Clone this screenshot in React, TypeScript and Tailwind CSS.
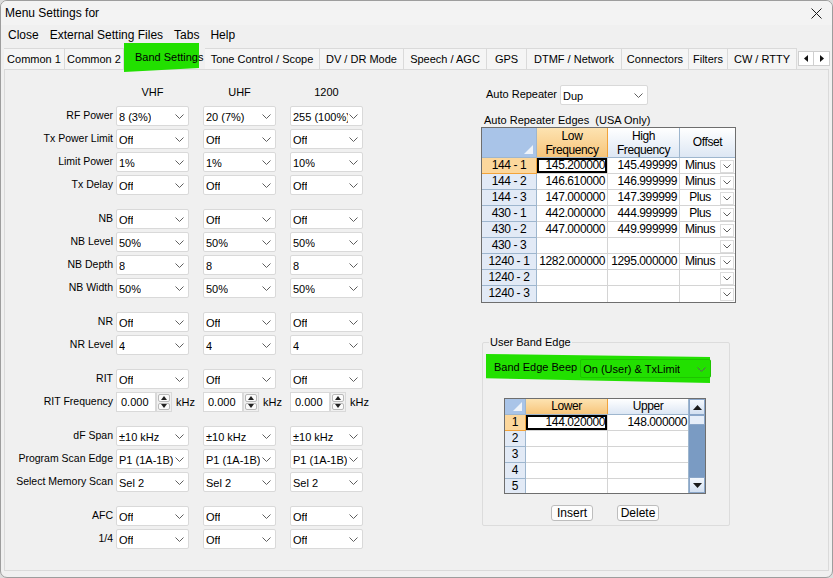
import React from 'react';

type Row = [string, string[] | 'spin'];

const OFF = ['Off', 'Off', 'Off'];

const groups: Row[][] = [
  [
    ['RF Power', ['8 (3%)', '20 (7%)', '255 (100%)']],
    ['Tx Power Limit', OFF],
    ['Limit Power', ['1%', '1%', '10%']],
    ['Tx Delay', OFF],
  ],
  [
    ['NB', OFF],
    ['NB Level', ['50%', '50%', '50%']],
    ['NB Depth', ['8', '8', '8']],
    ['NB Width', ['50%', '50%', '50%']],
  ],
  [
    ['NR', OFF],
    ['NR Level', ['4', '4', '4']],
  ],
  [
    ['RIT', OFF],
    ['RIT Frequency', 'spin'],
  ],
  [
    ['dF Span', ['±10 kHz', '±10 kHz', '±10 kHz']],
    ['Program Scan Edge', ['P1 (1A-1B)', 'P1 (1A-1B)', 'P1 (1A-1B)']],
    ['Select Memory Scan', ['Sel 2', 'Sel 2', 'Sel 2']],
  ],
  [
    ['AFC', OFF],
    ['1/4', OFF],
  ],
];

const tabs = [
  { label: 'Common 1', w: 'w-[61px]' },
  { label: 'Common 2', w: 'w-[59px]' },
  { label: 'Band Settings', w: 'w-[81px]', active: true },
  { label: 'Tone Control / Scope', w: 'w-[115px]' },
  { label: 'DV / DR Mode', w: 'w-[84px]' },
  { label: 'Speech / AGC', w: 'w-[83px]' },
  { label: 'GPS', w: 'w-[40px]' },
  { label: 'DTMF / Network', w: 'w-[95px]' },
  { label: 'Connectors', w: 'w-[67px]' },
  { label: 'Filters', w: 'w-[39px]' },
  { label: 'CW / RTTY', w: 'w-[69px]' },
];

const repeaterRows = [
  ['144 - 1', '145.200000', '145.499999', 'Minus'],
  ['144 - 2', '146.610000', '146.999999', 'Minus'],
  ['144 - 3', '147.000000', '147.399999', 'Plus'],
  ['430 - 1', '442.000000', '444.999999', 'Plus'],
  ['430 - 2', '447.000000', '449.999999', 'Minus'],
  ['430 - 3', '', '', ''],
  ['1240 - 1', '1282.000000', '1295.000000', 'Minus'],
  ['1240 - 2', '', '', ''],
  ['1240 - 3', '', '', ''],
];

function Chevron({ className = '' }: { className?: string }) {
  return (
    <svg width="9" height="5" viewBox="0 0 9 5" className={className}>
      <polyline points="0.5,0.5 4.5,4.5 8.5,0.5" fill="none" stroke="#5f5f5f" strokeWidth="1" />
    </svg>
  );
}

function Combo({
  value,
  width = 'w-[73px]',
  height = 'h-[20px]',
  tone = 'bg-white border-[#d9d9d9]',
}: {
  value: string;
  width?: string;
  height?: string;
  tone?: string;
}) {
  return (
    <div className={`${width} ${height} ${tone} relative flex flex-none items-center border rounded-[2px] pl-[2px] pr-[14px] overflow-hidden`}>
      <span className="text-[11px] leading-[14px] whitespace-nowrap overflow-hidden pt-[1px]">{value}</span>
      <Chevron className="absolute right-[4px] top-[7px]" />
    </div>
  );
}

function Spin() {
  return (
    <div className="w-[73px] flex flex-none items-center">
      <div className="w-[40px] h-[20px] flex-none bg-white border border-[#d9d9d9] flex items-center pl-[4px] text-[11px]">
        0.000
      </div>
      <div className="w-[16px] h-[20px] flex-none flex flex-col gap-[1px] p-[1px] bg-[#f0f0f0] border border-[#d9d9d9]">
        <div className="flex-1 flex items-center justify-center bg-[#fbfbfb] border border-[#b9b9b9] rounded-[2px]">
          <svg width="6" height="4" viewBox="0 0 6 4"><polygon points="0,4 3,0 6,4" fill="#222" /></svg>
        </div>
        <div className="flex-1 flex items-center justify-center bg-[#fbfbfb] border border-[#b9b9b9] rounded-[2px]">
          <svg width="6" height="4" viewBox="0 0 6 4"><polygon points="0,0 6,0 3,4" fill="#222" /></svg>
        </div>
      </div>
      <span className="ml-[4px] flex-none text-[11px]">kHz</span>
    </div>
  );
}

function Corner() {
  return (
    <div className="relative h-full bg-[#a9c4e8]">
      <svg width="9" height="9" viewBox="0 0 9 9" className="absolute right-[3px] bottom-[3px]">
        <polygon points="9,0 9,9 0,9" fill="#eef3fa" />
      </svg>
    </div>
  );
}

function LeftPanel() {
  return (
    <div className="w-[476px] flex-none">
      <div className="flex h-[14px] items-center text-[11px]">
        <div className="w-[111px]" />
        <div className="flex gap-[14px]">
          <div className="w-[73px] text-center">VHF</div>
          <div className="w-[73px] text-center">UHF</div>
          <div className="w-[73px] text-center">1200</div>
        </div>
      </div>
      <div className="mt-[7px] flex flex-col gap-[14px]">
        {groups.map((g, gi) => (
          <div key={gi} className="flex flex-col gap-[3px]">
            {g.map(([label, vals]) => (
              <div key={label} className="flex items-center h-[20px]">
                <div className="w-[111px] flex-none pr-[3px] pb-[1px] text-right text-[10.5px] whitespace-nowrap">{label}</div>
                <div className="flex gap-[14px]">
                  {vals === 'spin'
                    ? [0, 1, 2].map((i) => <Spin key={i} />)
                    : vals.map((v, i) => <Combo key={i} value={v} />)}
                </div>
              </div>
            ))}
          </div>
        ))}
      </div>
    </div>
  );
}

function RepeaterTable() {
  const grid = "text-[12px] tracking-[-0.4px] leading-[15px]";
  const last = repeaterRows.length - 1;
  return (
    <div className={`w-[255px] border border-[#6e6e6e] bg-white ${grid}`}>
      <div className="flex h-[30px] border-b border-[#9eb6ce]">
        <div className="w-[55px] border-r border-[#9eb6ce]">
          <Corner />
        </div>
        <div className="w-[71px] border-r border-[#f2a33a] bg-gradient-to-b from-[#fde3b1] to-[#f7c57a] flex flex-col items-center justify-center leading-[14px]">
          <span>Low</span>
          <span>Frequency</span>
        </div>
        <div className="w-[72px] border-r border-[#9eb6ce] bg-gradient-to-b from-[#ffffff] to-[#dde7f4] flex flex-col items-center justify-center leading-[14px]">
          <span>High</span>
          <span>Frequency</span>
        </div>
        <div className="w-[55px] bg-gradient-to-b from-[#ffffff] to-[#dde7f4] flex items-center justify-center">
          Offset
        </div>
      </div>
      {repeaterRows.map((r, i) => (
        <div key={i} className="flex h-[16px]">
          <div
            className={`w-[55px] border-r text-center ${
              i === 0 ? 'bg-[#fcd79c] border-[#f2a33a]' : 'bg-[#e2eaf6] border-[#9eb6ce]'
            } ${i === last ? '' : 'border-b'}`}
          >
            {r[0]}
          </div>
          <div
            className={`w-[71px] border-r border-[#d4d4d4] text-right pr-[2px] ${
              i === 0 ? 'shadow-[inset_0_0_0_2px_#000]' : ''
            } ${i === last ? '' : 'border-b'}`}
          >
            {r[1]}
          </div>
          <div className={`w-[72px] border-r border-[#d4d4d4] text-right pr-[2px] ${i === last ? '' : 'border-b'}`}>
            {r[2]}
          </div>
          <div className={`w-[55px] flex border-[#d4d4d4] ${i === last ? '' : 'border-b'}`}>
            <div className="w-[40px] text-center">{r[3]}</div>
            <div className="w-[14px] h-[13px] mt-[2px] flex items-center justify-center border border-[#dcdcdc] bg-white">
              <svg width="8" height="5" viewBox="0 0 8 5">
                <polyline points="0.5,0.5 4,4 7.5,0.5" fill="none" stroke="#5f5f5f" strokeWidth="1" />
              </svg>
            </div>
          </div>
        </div>
      ))}
    </div>
  );
}

function BandEdgeGrid() {
  const grid = "text-[12px] tracking-[-0.4px] leading-[15px]";
  const rows = [
    ['1', '144.020000', '148.000000'],
    ['2', '', ''],
    ['3', '', ''],
    ['4', '', ''],
    ['5', '', ''],
  ];
  return (
    <div className={`flex w-[202px] h-[96px] border border-[#6e6e6e] bg-white overflow-hidden ${grid}`}>
      <div className="w-[183px] flex-none">
        <div className="flex h-[16px] border-b border-[#9eb6ce]">
          <div className="w-[21px] border-r border-[#9eb6ce]">
            <Corner />
          </div>
          <div className="w-[82px] border-r border-[#f2a33a] bg-gradient-to-b from-[#fde3b1] to-[#f7c57a] text-center">
            Lower
          </div>
          <div className="w-[80px] bg-gradient-to-b from-[#ffffff] to-[#dde7f4] text-center">Upper</div>
        </div>
        {rows.map((r, i) => (
          <div key={i} className="flex h-[16px]">
            <div
              className={`w-[21px] border-r border-b text-center ${
                i === 0 ? 'bg-[#fcd79c] border-[#f2a33a]' : 'bg-[#e2eaf6] border-[#9eb6ce]'
              }`}
            >
              {r[0]}
            </div>
            <div
              className={`w-[82px] border-r border-b border-[#d4d4d4] text-right pr-[2px] ${
                i === 0 ? 'shadow-[inset_0_0_0_2px_#000]' : ''
              }`}
            >
              {r[1]}
            </div>
            <div className="w-[80px] border-b border-[#d4d4d4] text-right pr-[1px]">{r[2]}</div>
          </div>
        ))}
      </div>
      <div className="w-[17px] flex-none flex flex-col bg-[#7a9bc3] border-l border-[#9eb6ce]">
        <div className="h-[16px] flex items-center justify-center bg-gradient-to-b from-[#f4f8fd] to-[#d3e0f1] border border-[#8aa6c9]">
          <svg width="9" height="5" viewBox="0 0 9 5"><polygon points="0,5 4.5,0 9,5" fill="#1a1a1a" /></svg>
        </div>
        <div className="h-[10px] bg-[#e6eef9] border border-[#8aa6c9]" />
        <div className="flex-1" />
        <div className="h-[16px] flex items-center justify-center bg-gradient-to-b from-[#f4f8fd] to-[#d3e0f1] border border-[#8aa6c9]">
          <svg width="9" height="5" viewBox="0 0 9 5"><polygon points="0,0 9,0 4.5,5" fill="#1a1a1a" /></svg>
        </div>
      </div>
    </div>
  );
}

function RightPanel() {
  return (
    <div className="flex-none text-[11px]">
      <div className="flex items-center h-[20px] pl-[5px] gap-[3px]">
        <span className="pb-[2px] whitespace-nowrap">Auto Repeater</span>
        <Combo value="Dup" width="w-[88px]" />
      </div>
      <div className="mt-[8px] ml-[3px] h-[14px] leading-[14px] whitespace-pre">Auto Repeater Edges  (USA Only)</div>
      <RepeaterTable />

      <fieldset className="mt-[32px] ml-[1px] w-[248px] h-[191px] border border-[#dcdcdc] rounded-[2px]">
        <legend className="ml-[6px] px-[1px] leading-[14px]">User Band Edge</legend>
        <div className="relative mt-[5px] ml-[3px] w-[224px] h-[29px]">
          <div className="absolute inset-0 bg-[#22e000] [clip-path:polygon(0_0,100%_10%,100%_100%,0_84%)]" />
          <div className="relative flex items-center h-full pl-[8px] gap-[3px] pb-[1px]">
            <span className="pb-[2px] whitespace-nowrap flex-none">Band Edge Beep</span>
            <Combo value="On (User) & TxLimit" width="w-[131px]" height="h-[19px]" tone="bg-transparent border-[#1ec400]" />
          </div>
        </div>
        <div className="mt-[15px] ml-[21px]">
          <BandEdgeGrid />
        </div>
        <div className="mt-[11px] ml-[68px] flex gap-[24px] text-[12px]">
          <button className="w-[42px] h-[16px] leading-[14px] border border-[#bdbdbd] rounded-[3px] bg-[#fdfdfd]">Insert</button>
          <button className="w-[42px] h-[16px] leading-[14px] border border-[#bdbdbd] rounded-[3px] bg-[#fdfdfd]">Delete</button>
        </div>
      </fieldset>
    </div>
  );
}

export default function App() {
  return (
    <div className="w-[833px] h-[578px] bg-[#dcdcdc] font-['Liberation_Sans',Arial,sans-serif] text-black">
      <div className="w-full h-full flex flex-col bg-[#f0f0f0] border border-[#9d9d9d] rounded-[7px] overflow-hidden">
        {/* Title bar */}
        <div className="h-[24px] flex items-center justify-between bg-[#f3f3f3] pl-[4px] pr-[10px] text-[12px]">
          <span>Menu Settings for</span>
          <svg width="11" height="11" viewBox="0 0 11 11">
            <path d="M0.5 0.5 L10.5 10.5 M10.5 0.5 L0.5 10.5" stroke="#1a1a1a" strokeWidth="1" />
          </svg>
        </div>

        {/* Menu bar */}
        <div className="h-[20px] flex items-center gap-[11px] pl-[7px] text-[12px]">
          <span>Close</span>
          <span>External Setting Files</span>
          <span>Tabs</span>
          <span>Help</span>
        </div>

        {/* Tab strip */}
        <div className="mt-[3px] h-[21px] flex pl-[3px] text-[11px]">
          {tabs.map((t) =>
            t.active ? (
              <div key={t.label} className={`${t.w} relative h-[21px] flex-none`}>
                <div className="absolute left-0 top-[-5px] w-[75px] h-[29px] bg-[#22e000] [clip-path:polygon(0_0,100%_0,100%_86%,0_100%)]" />
                <div className="relative pl-[11px] pt-[2px] leading-[14px] whitespace-nowrap">{t.label}</div>
              </div>
            ) : (
              <div
                key={t.label}
                className={`${t.w} h-[21px] flex-none flex items-center justify-center border border-b-0 border-l-0 border-[#dadada] bg-[#f5f5f5] whitespace-nowrap pt-[1px]`}
              >
                {t.label}
              </div>
            )
          )}
          <div className="ml-[1px] mt-[3px] flex h-[15px]">
            <div className="w-[16px] flex items-center justify-center border border-[#cfcfcf] bg-white">
              <svg width="4" height="7" viewBox="0 0 4 7"><polygon points="4,0 4,7 0,3.5" fill="#111" /></svg>
            </div>
            <div className="w-[16px] flex items-center justify-center border border-l-0 border-[#cfcfcf] bg-white">
              <svg width="4" height="7" viewBox="0 0 4 7"><polygon points="0,0 0,7 4,3.5" fill="#111" /></svg>
            </div>
          </div>
        </div>

        {/* Tab page */}
        <div className="mx-[3px] mb-[6px] flex-1 flex border border-[#dadada] pt-[15px]">
          <LeftPanel />
          <RightPanel />
        </div>
      </div>
    </div>
  );
}
